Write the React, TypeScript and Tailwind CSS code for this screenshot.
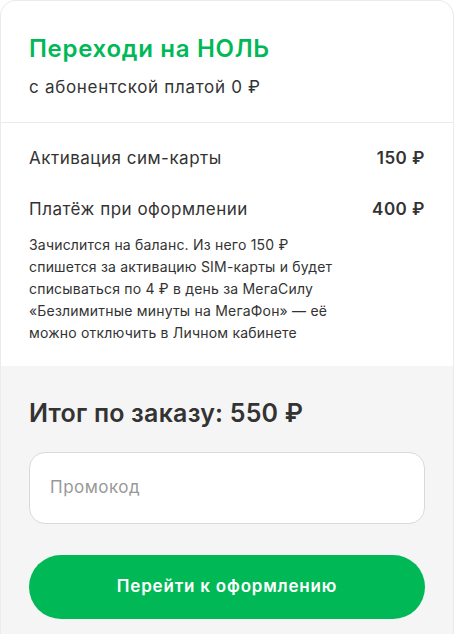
import React from "react";

export default function App() {
  return (
    <div
      className="w-[454px] h-[634px] overflow-hidden bg-white text-[#333333]"
      style={{ fontFamily: "Inter, 'Noto Sans', sans-serif" }}
    >
      <div className="border border-b-0 border-[#ebebeb] rounded-t-2xl overflow-hidden h-full flex flex-col">
        {/* Header */}
        <div className="px-7 pt-8 pb-[23px] border-b border-[#ebebeb]">
          <h1 className="text-[24px] leading-8 font-semibold text-[#00b956] tracking-[0.7px]">
            Переходи на НОЛЬ
          </h1>
          <p className="mt-[10px] text-[17px] leading-6 tracking-[0.7px]">с абонентской платой 0 ₽</p>
        </div>

        {/* Details */}
        <div className="px-7 pt-[23px] pb-[22px]">
          <div className="flex justify-between items-center text-[17px] leading-6 tracking-[0.5px]">
            <span>Активация сим-карты</span>
            <span className="font-semibold">150 ₽</span>
          </div>
          <div className="mt-[27px] flex justify-between items-center text-[17px] leading-6 tracking-[0.5px]">
            <span>Платёж при оформлении</span>
            <span className="font-semibold">400 ₽</span>
          </div>
          <p className="mt-[13px] text-[14px] leading-[22px] tracking-[0.2px]">
            Зачислится на баланс. Из него 150 ₽
            <br />
            спишется за активацию SIM-карты и будет
            <br />
            списываться по 4 ₽ в день за МегаСилу
            <br />
            «Безлимитные минуты на МегаФон» — её
            <br />
            можно отключить в Личном кабинете
          </p>
        </div>

        {/* Summary */}
        <div className="flex-1 bg-[#f5f5f5] px-7 pt-[31px] pb-4">
          <h2 className="text-[25px] leading-8 font-semibold tracking-[0.2px]">Итог по заказу: 550 ₽</h2>
          <div className="mt-[23px] h-[72px] rounded-2xl border border-[#d9d9d9] bg-white flex items-center px-5">
            <input
              className="w-full outline-none bg-transparent text-[17px] tracking-[0.5px] placeholder:text-[#999999]"
              placeholder="Промокод"
            />
          </div>
          <button className="mt-[31px] w-full h-16 rounded-full bg-[#00b956] text-white text-[17px] font-semibold tracking-[0.8px]">
            Перейти к оформлению
          </button>
        </div>
      </div>
    </div>
  );
}
